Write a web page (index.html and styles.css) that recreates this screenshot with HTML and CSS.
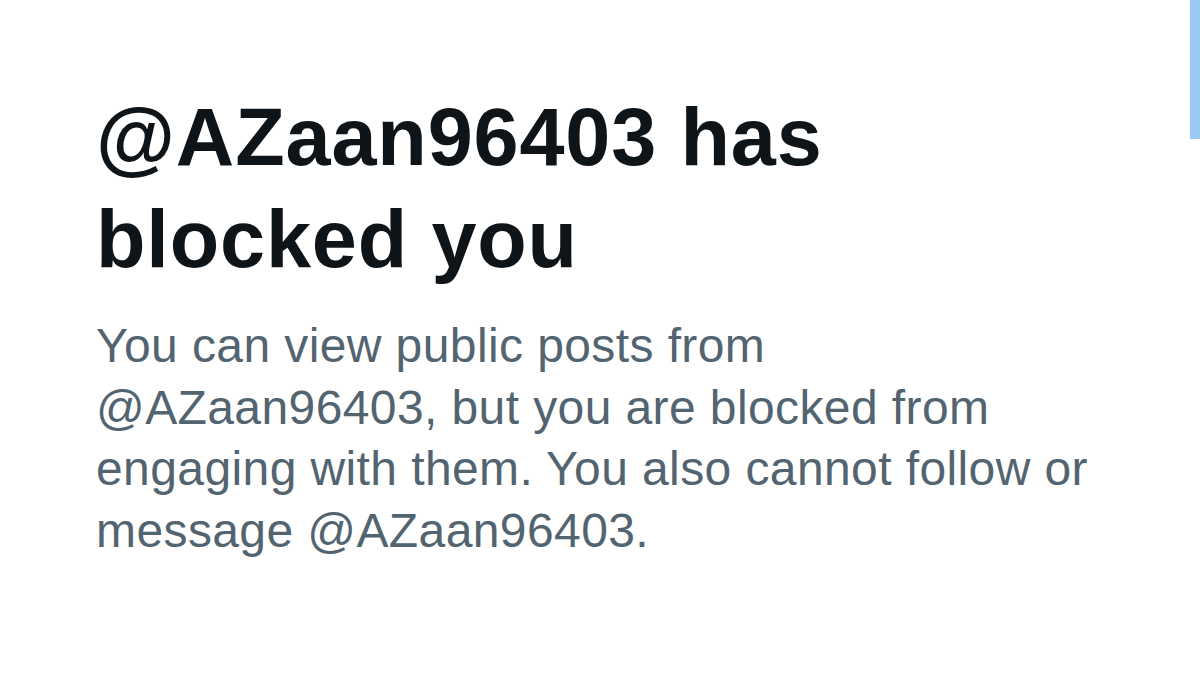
FILE: index.html
```html
<!DOCTYPE html>
<html>
<head>
<meta charset="utf-8">
<link rel="stylesheet" href="styles.css">
</head>
<body>
<main class="page">
  <section class="content">
    <h1 class="title">@AZaan96403 has blocked you</h1>
    <p class="desc">You can view public posts from @AZaan96403, but you are blocked from engaging with them. You also cannot follow or message @AZaan96403.</p>
  </section>
  <div class="scrollbar"><div class="thumb"></div></div>
</main>
</body>
</html>
```

FILE: styles.css
```css
html, body {
  margin: 0;
  padding: 0;
  background: #ffffff;
}
.page {
  width: 1200px;
  height: 688px;
  display: flex;
  overflow: hidden;
}
.content {
  flex: 1;
  padding: 86px 0 0 96px;
  font-family: "Liberation Sans", Arial, sans-serif;
}
.title {
  margin: 0;
  width: 900px;
  font-size: 81px;
  line-height: 102px;
  font-weight: 700;
  letter-spacing: 0.85px;
  color: #0f1419;
}
.desc {
  margin: 25px 0 0;
  width: 1010px;
  font-size: 48px;
  line-height: 61.5px;
  letter-spacing: 0.4px;
  color: #536471;
}
.scrollbar {
  width: 10px;
  height: 688px;
}
.thumb {
  height: 139px;
  background: #99c9f2;
}
```
